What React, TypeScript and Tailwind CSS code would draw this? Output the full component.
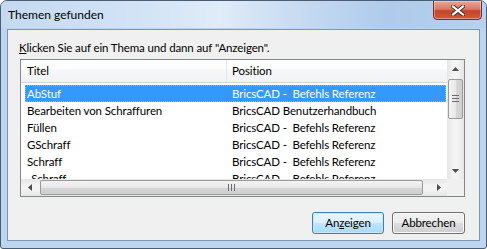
import React from 'react';

const rows = [
  { title: 'AbStuf', pos: 'BricsCAD -  Befehls Referenz', selected: true },
  { title: 'Bearbeiten von Schraffuren', pos: 'BricsCAD Benutzerhandbuch' },
  { title: 'Füllen', pos: 'BricsCAD -  Befehls Referenz' },
  { title: 'GSchraff', pos: 'BricsCAD -  Befehls Referenz' },
  { title: 'Schraff', pos: 'BricsCAD -  Befehls Referenz' },
  { title: '-Schraff', pos: 'BricsCAD -  Befehls Referenz' },
];

const Arrow: React.FC<{ dir: 'up' | 'down' | 'left' | 'right' }> = ({ dir }) => {
  const pts = {
    up: '0,4 7,4 3.5,0',
    down: '0,0 7,0 3.5,4',
    left: '4,0 4,7 0,3.5',
    right: '0,0 0,7 4,3.5',
  }[dir];
  const vert = dir === 'up' || dir === 'down';
  return (
    <svg width={vert ? 7 : 4} height={vert ? 4 : 7} viewBox={vert ? '0 0 7 4' : '0 0 4 7'}>
      <polygon points={pts} fill="#4d4d4d" />
    </svg>
  );
};

const Button: React.FC<{ primary?: boolean; children: React.ReactNode }> = ({ primary, children }) => (
  <button
    className={
      primary
        ? 'w-[72px] h-[22px] rounded-[3px] border border-[#3c7fb1] bg-[linear-gradient(#eaf6fd_0%,#d9f0fc_50%,#bee6fd_51%,#a7d9f5_100%)] shadow-[inset_0_0_0_1px_#c8e9fb] text-black'
        : 'w-[73px] h-[22px] rounded-[3px] border border-[#707070] bg-[linear-gradient(#f2f2f2_0%,#ebebeb_50%,#dddddd_51%,#cfcfcf_100%)] shadow-[inset_0_0_0_1px_#fcfcfc] text-black'
    }
  >
    {children}
  </button>
);

export default function App() {
  return (
    <div
      className="w-[487px] h-[249px] flex flex-col rounded-t-[7px] rounded-b-[3px] border border-[#4b5d72] bg-[#bdd5ef] relative overflow-hidden text-[11.5px] tracking-[-0.12px]"
      style={{ fontFamily: 'Lato, "Liberation Sans", sans-serif' }}
    >
      {/* title bar */}
      <div className="h-[27px] shrink-0 flex items-center pl-[7px] bg-[linear-gradient(90deg,#c4d9f0_0%,#d3e4f6_30%,#e0ecf8_45%,#c9dcf2_60%,#aecbeb_80%,#b7d1ee_100%)]">
        <span className="text-[12px] tracking-normal text-black">Themen gefunden</span>
      </div>
      <div className="absolute top-[-1px] right-[4px] w-[49px] h-[20px] rounded-b-[4px] border border-[#7a2e24] bg-[linear-gradient(#e8a597_0%,#d97a66_45%,#c4422b_55%,#d05a3e_100%)] shadow-[inset_0_0_0_1px_rgba(255,255,255,0.35)] flex items-center justify-center">
        <svg width="14" height="11" viewBox="0 0 14 11">
          <path d="M2 1.5 L12 9.5 M12 1.5 L2 9.5" stroke="#4a2a25" strokeWidth="4" strokeLinecap="square" />
          <path d="M2 1.5 L12 9.5 M12 1.5 L2 9.5" stroke="#ffffff" strokeWidth="2.2" strokeLinecap="square" />
        </svg>
      </div>

      {/* client area */}
      <div className="flex-1 mx-[6px] mb-[7px] mt-[1px] border border-[#8096ad] bg-[#f0f0f0] flex flex-col text-black">
        <div className="pl-[11px] pt-[10px] h-[29px] leading-[15px]">
          <span className="underline">K</span>licken Sie auf ein Thema und dann auf "Anzeigen".
        </div>

        <div className="ml-[12px] mr-[14px] h-[138px] border border-[#828790] bg-white grid grid-cols-[1fr_17px] grid-rows-[1fr_17px]">
          {/* list content */}
          <div className="overflow-hidden flex flex-col">
            <div className="h-[23px] shrink-0 flex bg-[linear-gradient(#ffffff_0%,#ffffff_40%,#f7f8fa_41%,#f1f2f4_100%)] border-b border-[#d5d5d5]">
              <div className="w-[206px] pl-[6px] flex items-center border-r border-[#e3e8ee]">Titel</div>
              <div className="flex-1 pl-[5px] flex items-center">Position</div>
            </div>
            <div className="pl-[4px] pt-[2px]">
              {rows.map((r) => (
                <div
                  key={r.title}
                  className={
                    r.selected
                      ? 'h-[17px] w-[421px] flex items-center bg-[#3399ff] text-white outline-1 outline-dotted outline-[#f5a623] -outline-offset-1'
                      : 'h-[17px] w-[421px] flex items-center'
                  }
                >
                  <div className="w-[206px] pl-[2px] whitespace-pre">{r.title}</div>
                  <div className="flex-1 pl-[1px] whitespace-pre">{r.pos}</div>
                </div>
              ))}
            </div>
          </div>

          {/* vertical scrollbar */}
          <div className="bg-[linear-gradient(90deg,#e6e6e6,#f4f4f4_40%,#f4f4f4_60%,#e6e6e6)] flex flex-col items-center">
            <div className="h-[17px] w-full flex items-center justify-center">
              <Arrow dir="up" />
            </div>
            <div className="h-[40px] w-[15px] mt-[2px] rounded-[2px] border border-[#9a9a9a] bg-[linear-gradient(90deg,#f3f3f3,#e8e8e8_50%,#d7d7d7_51%,#cfcfcf)] flex flex-col items-center justify-center gap-[1px]">
              <div className="w-[7px] h-[2px] border-t border-[#6b6b6b]" />
              <div className="w-[7px] h-[2px] border-t border-[#6b6b6b]" />
              <div className="w-[7px] h-[2px] border-t border-[#6b6b6b]" />
            </div>
            <div className="flex-1" />
            <div className="h-[17px] w-full flex items-center justify-center">
              <Arrow dir="down" />
            </div>
          </div>

          {/* horizontal scrollbar */}
          <div className="bg-[linear-gradient(#e6e6e6,#f4f4f4_40%,#f4f4f4_60%,#e6e6e6)] flex items-center">
            <div className="w-[17px] h-full flex items-center justify-center">
              <Arrow dir="left" />
            </div>
            <div className="w-[383px] h-[15px] ml-[2px] rounded-[2px] border border-[#9a9a9a] bg-[linear-gradient(#f3f3f3,#e8e8e8_50%,#d7d7d7_51%,#cfcfcf)] flex items-center justify-center gap-[1px]">
              <div className="h-[7px] w-[2px] border-l border-[#6b6b6b]" />
              <div className="h-[7px] w-[2px] border-l border-[#6b6b6b]" />
              <div className="h-[7px] w-[2px] border-l border-[#6b6b6b]" />
            </div>
            <div className="flex-1" />
            <div className="w-[17px] h-full flex items-center justify-center">
              <Arrow dir="right" />
            </div>
          </div>
          <div className="bg-[#f0f0f0]" />
        </div>

        <div className="flex justify-end gap-[8px] mr-[14px] mt-[15px]">
          <Button primary>
            An<span className="underline">z</span>eigen
          </Button>
          <Button>Abbrechen</Button>
        </div>
      </div>
    </div>
  );
}
